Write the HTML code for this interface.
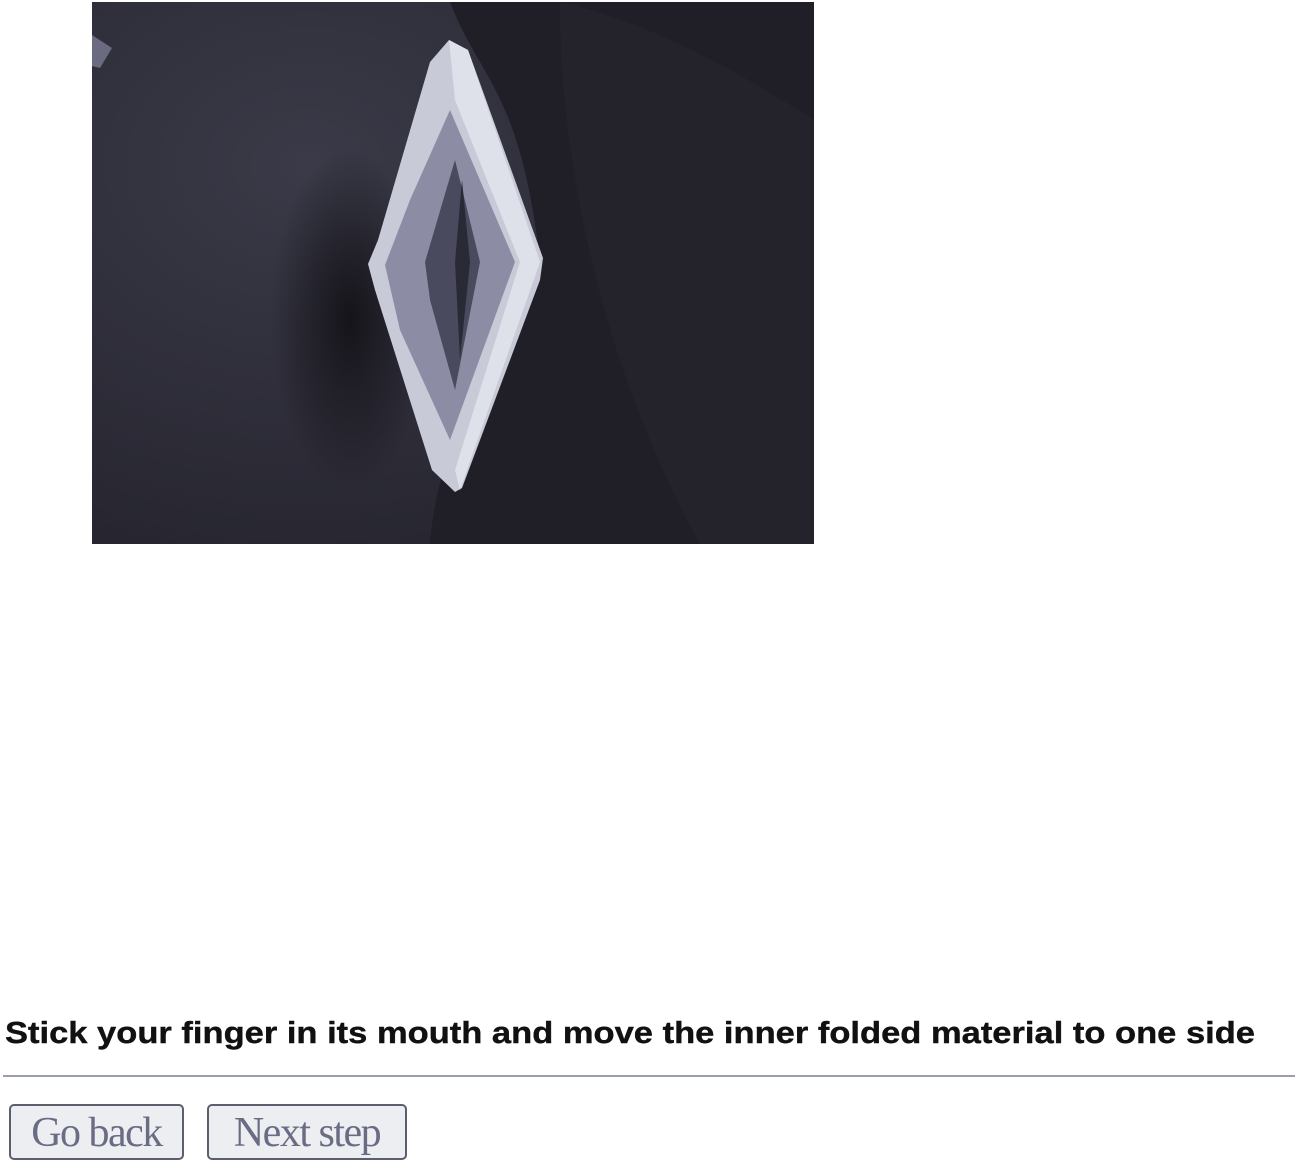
<!DOCTYPE html>
<html><head><meta charset="utf-8"><style>
html,body{margin:0;padding:0;background:#fff;width:1300px;height:1165px;overflow:hidden;position:relative}
.btn{position:absolute;top:1104px;height:52px;border:2px solid #5c5e70;border-radius:5px;background:#eceef2;font-family:"Liberation Serif",serif;font-size:42px;letter-spacing:-1.5px;color:#6a6c84;line-height:54px;text-align:center;box-sizing:content-box}
</style></head><body>
<svg style="position:absolute;left:92px;top:2px" width="722" height="542" viewBox="92 2 722 542">
<defs>
<radialGradient id="bg" cx="0.3" cy="0.3" r="0.8"><stop offset="0" stop-color="#3a3a48"/><stop offset="1" stop-color="#25242e"/></radialGradient>
<radialGradient id="sh" cx="0.5" cy="0.5" r="0.5"><stop offset="0" stop-color="#15141a"/><stop offset="1" stop-color="#15141a" stop-opacity="0"/></radialGradient>
</defs>
<rect x="92" y="2" width="722" height="542" fill="url(#bg)"/>
<path d="M450 2 C 480 80 520 90 540 260 C 500 380 440 420 430 544 L814 544 L814 2Z" fill="#201f27"/>
<path d="M560 2 C 640 20 720 60 814 120 L814 544 L700 544 C 620 400 560 200 560 2Z" fill="#24232b"/>
<ellipse cx="350" cy="320" rx="80" ry="170" fill="url(#sh)"/>
<path d="M92 35 L112 48 L100 68 L92 66Z" fill="#6a6a80"/>
<path d="M449 40 L468 50 L543 258 L540 280 L462 488 L455 492 L432 470 L375 290 L368 264 L378 240 L430 62Z" fill="#c8cad8"/>
<path d="M449 40 L468 50 L540 262 L460 490 L455 470 L520 262 L455 100Z" fill="#dfe1ea"/>
<path d="M450 110 L515 262 L450 440 L400 330 L385 265 L410 200Z" fill="#8c8ca4"/>
<path d="M455 160 L480 262 L455 390 L430 300 L425 262Z" fill="#4a4a5e"/>
<path d="M462 180 L470 262 L460 360 L455 262Z" fill="#2a2a36"/>
</svg>
<svg style="position:absolute;left:0;top:1005px" width="1300" height="55">
<text x="5" y="38" textLength="1250" lengthAdjust="spacingAndGlyphs" font-family="Liberation Sans, sans-serif" font-weight="bold" font-size="31" fill="#111" stroke="#111" stroke-width="0.4">Stick your finger in its mouth and move the inner folded material to one side</text>
</svg>
<div style="position:absolute;left:3px;top:1075px;width:1292px;height:2px;background:#9a9eb4"></div>
<div class="btn" style="left:9px;width:171px">Go back</div>
<div class="btn" style="left:207px;width:196px">Next step</div>
</body></html>
